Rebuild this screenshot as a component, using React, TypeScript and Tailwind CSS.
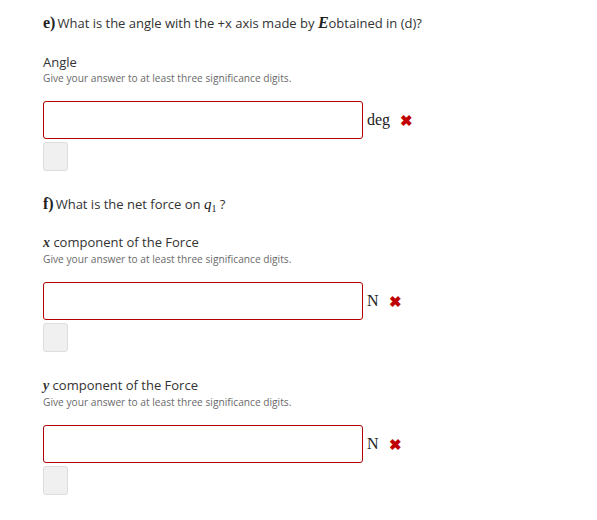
import * as React from "react"

const serif = "font-['Liberation_Serif','DejaVu_Serif',serif]"

interface AnswerPart {
  label: React.ReactNode
  unit: string
}

function AnswerBlock({ label, unit }: AnswerPart) {
  return (
    <div>
      <div className="text-[13px] leading-[18px] text-[#333]">{label}</div>
      <div className="text-[10.2px] leading-[14px] text-[#6a6a6a]">
        Give your answer to at least three significance digits.
      </div>
      <div className="mt-[16px] flex items-center">
        <input
          type="text"
          aria-label="answer"
          className="h-[38px] w-[320px] rounded-[3px] border border-[#b20000] bg-white outline-none"
        />
        <span className={`${serif} ml-[4px] text-[16px] text-[#222]`}>{unit}</span>
        <span className="ml-[10px] text-[15px] font-bold leading-none text-[#c00000]">✖</span>
      </div>
      <div className="mt-[3px] h-[29px] w-[25px] rounded-[3px] border border-[#ddd] bg-[#f0f0f0]" />
    </div>
  )
}

function Question({ letter, children }: { letter: string; children: React.ReactNode }) {
  return (
    <div className="flex items-baseline text-[13px] leading-[18px] text-[#333]">
      <span className={`${serif} text-[16px] font-bold text-[#222]`}>{letter})</span>
      <span className="ml-[2px]">{children}</span>
    </div>
  )
}

export default function App() {
  return (
    <div className="min-h-[520px] w-[597px] bg-white pl-[43px] pt-[14px] font-['Open_Sans','Noto_Sans',sans-serif]">
      <Question letter="e">
        What is the angle with the +x axis made by{" "}
        <span className={`${serif} text-[16px] font-bold italic text-[#222]`}>E</span>
        obtained in (d)?
      </Question>

      <div className="mt-[21px]">
        <AnswerBlock label="Angle" unit="deg" />
      </div>

      <div className="mt-[24px]">
        <Question letter="f">
          What is the net force on{" "}
          <span className={`${serif} text-[15px] italic text-[#222]`}>
            q<sub className="text-[10px] not-italic">1</sub>
          </span>{" "}
          ?
        </Question>
      </div>

      <div className="mt-[20px]">
        <AnswerBlock
          label={
            <>
              <span className={`${serif} text-[14px] font-bold italic`}>x</span> component of the Force
            </>
          }
          unit="N"
        />
      </div>

      <div className="mt-[24px]">
        <AnswerBlock
          label={
            <>
              <span className={`${serif} text-[14px] font-bold italic`}>y</span> component of the Force
            </>
          }
          unit="N"
        />
      </div>
    </div>
  )
}
